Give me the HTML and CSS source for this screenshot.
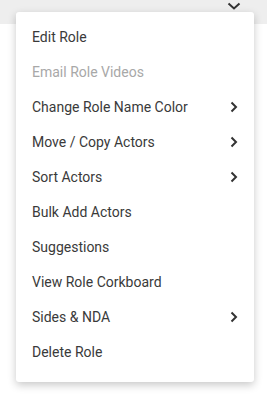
FILE: index.html
```html
<!DOCTYPE html>
<html lang="en">
<head>
    <meta charset="UTF-8">
    <meta name="viewport" content="width=device-width, initial-scale=1.0">
    <title>Role Menu</title>
    <link rel="stylesheet" href="styles.css">
</head>
<body>
    <div class="topbar">
        <svg class="caret" width="14" height="8" viewBox="0 0 14 8">
            <path d="M1.5 1.5 L7 6.5 L12.5 1.5" fill="none" stroke="#333" stroke-width="2"/>
        </svg>
    </div>
    <div class="menu">
        <div class="menu-item">Edit Role</div>
        <div class="menu-item disabled">Email Role Videos</div>
        <div class="menu-item">Change Role Name Color
            <svg class="arrow" width="8" height="12" viewBox="0 0 8 12"><path d="M1.5 1.5 L6 6 L1.5 10.5" fill="none" stroke="#333" stroke-width="2"/></svg>
        </div>
        <div class="menu-item">Move / Copy Actors
            <svg class="arrow" width="8" height="12" viewBox="0 0 8 12"><path d="M1.5 1.5 L6 6 L1.5 10.5" fill="none" stroke="#333" stroke-width="2"/></svg>
        </div>
        <div class="menu-item">Sort Actors
            <svg class="arrow" width="8" height="12" viewBox="0 0 8 12"><path d="M1.5 1.5 L6 6 L1.5 10.5" fill="none" stroke="#333" stroke-width="2"/></svg>
        </div>
        <div class="menu-item">Bulk Add Actors</div>
        <div class="menu-item">Suggestions</div>
        <div class="menu-item">View Role Corkboard</div>
        <div class="menu-item">Sides &amp; NDA
            <svg class="arrow" width="8" height="12" viewBox="0 0 8 12"><path d="M1.5 1.5 L6 6 L1.5 10.5" fill="none" stroke="#333" stroke-width="2"/></svg>
        </div>
        <div class="menu-item">Delete Role</div>
    </div>
</body>
</html>
```
FILE: styles.css
```css
body {
    margin: 0;
    font-family: Roboto, Arial, sans-serif;
    background-color: white;
}
.topbar {
    height: 24px;
    background-color: #eeeeee;
    position: relative;
}
.caret {
    position: absolute;
    left: 227px;
    top: 2px;
}
.menu {
    position: absolute;
    top: 12px;
    left: 16px;
    width: 238px;
    background: white;
    border-radius: 3px;
    box-shadow: 0 3px 8px rgba(0,0,0,0.22);
    padding: 7px 0 13px;
    box-sizing: border-box;
}
.menu-item {
    display: flex;
    align-items: center;
    justify-content: space-between;
    height: 35px;
    padding: 0 16px;
    font-size: 14px;
    color: #3a3a3a;
}
.menu-item.disabled {
    color: #a8a8a8;
}
```
